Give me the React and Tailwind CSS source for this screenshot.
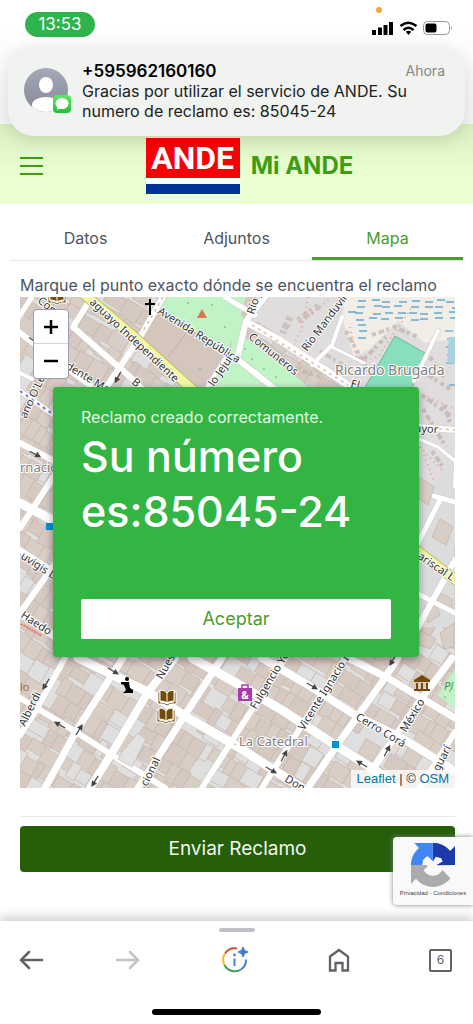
import React from "react";

const sans = "font-['Inter','Liberation_Sans',sans-serif]";

// small seeded generator so the city blocks are always the same
const makeRandom = (seed) => () => {
  seed = (seed * 16807) % 2147483647;
  return seed / 2147483647;
};

const buildings = (() => {
  const rnd = makeRandom(77);
  const list = [];
  for (let row = -18; row < 22; row++) {
    let x = -330;
    while (x < 340) {
      const w = 7 + Math.round(rnd() * 13);
      const h = 12 + Math.round(rnd() * 8);
      const r = rnd();
      if (r > 0.1) {
        list.push({ x, y: row * 17 + Math.round(rnd() * 3), w, h, fill: r > 0.9 ? "#e0dfe0" : r > 0.5 ? "#d9cec6" : "#d5c9c1" });
      }
      x += w;
    }
  }
  return list;
})();

const roads = [
  { d: "M58 361 L128 395 L168 421 L220 451 L252 472 L282 491", w: 10 },
  { d: "M0 401 L48 430 L92 458 L145 491", w: 7 },
  { d: "M172 361 L218 387 L265 415 L312 446 L355 473 L378 491", w: 10 },
  { d: "M242 361 L288 388 L335 418 L382 441 L435 474", w: 9 },
  { d: "M328 361 L368 381 L408 405 L435 421", w: 8 },
  { d: "M45 361 L15 415 L0 438", w: 7 },
  { d: "M103 361 L58 431 L25 491", w: 8 },
  { d: "M155 361 L128 395 L92 456 L70 491", w: 9 },
  { d: "M202 361 L165 418 L118 491", w: 8 },
  { d: "M265 361 L217 436 L182 491", w: 7 },
  { d: "M325 361 L282 428 L242 491", w: 7 },
  { d: "M378 361 L362 385 L315 451 L288 491", w: 8 },
  { d: "M432 361 L402 401 L352 473", w: 8 },
  { d: "M435 435 L400 491", w: 7 },
  { d: "M12 0 L0 18", w: 6 },
  { d: "M72 0 L53 30 L117 86 L122 92", w: 7 },
  { d: "M143 0 L120 40 L85 92", w: 7 },
  { d: "M0 36 L70 88", w: 7 },
  { d: "M0 76 L12 82", w: 5 },
  { d: "M0 94 L34 118", w: 6 },
  { d: "M0 146 L34 164", w: 7 },
  { d: "M0 206 L34 224", w: 10 },
  { d: "M36 176 L0 231", w: 7 },
  { d: "M0 253 L34 275", w: 7 },
  { d: "M34 268 L0 316", w: 7 },
  { d: "M0 316 L60 356", w: 9 },
  { d: "M245 0 L226 24 L217 62 L255 92", w: 7 },
  { d: "M205 0 L235 18", w: 6 },
  { d: "M228 26 L258 42 L328 88", w: 8 },
  { d: "M322 20 L312 48 L292 68", w: 5 },
  { d: "M312 50 L344 66", w: 4 },
  { d: "M418 34 L394 84", w: 5 },
  { d: "M398 130 L435 133", w: 7 },
  { d: "M399 142 L418 150 L435 164", w: 4 },
  { d: "M435 162 L434 190", w: 3 },
  { d: "M414 199 L435 205", w: 6 },
  { d: "M420 203 L398 246", w: 6 },
  { d: "M435 263 L398 330", w: 7 },
  { d: "M398 297 L435 316", w: 6 },
  { d: "M206 60 L186 92", w: 5 },
];

const streetNames = [
  { t: "aguayo Independiente", x: 69, y: 6, a: 43 },
  { t: "Avenida República", x: 137, y: 16, a: 32 },
  { t: "Comuneros", x: 228, y: 41, a: 39 },
  { t: "Río J", x: 234, y: 18, a: -72 },
  { t: "Río Manduvirá", x: 287, y: 55, a: -53 },
  { t: "lo Jejuí", x: 194, y: 90, a: -56 },
  { t: "Cons", x: 17, y: 5, a: 38 },
  { t: "dente Mar", x: 45, y: 71, a: 31 },
  { t: "B", x: 111, y: 86, a: 40 },
  { t: "ano O'Lea", x: 6, y: 122, a: -65 },
  { t: "uvigis Da", x: 0, y: 261, a: 33 },
  { t: "Haedo", x: 0, y: 320, a: 33 },
  { t: "Alberdi", x: 5, y: 430, a: -64 },
  { t: "Nues", x: 142, y: 383, a: -60 },
  { t: "cional", x: 127, y: 490, a: -64 },
  { t: "Fulgencio Yeg", x: 236, y: 413, a: -59 },
  { t: "Vicente Ignacio Itu", x: 284, y: 434, a: -58 },
  { t: "Cerro Corá", x: 335, y: 422, a: 31 },
  { t: "México", x: 386, y: 436, a: -59 },
  { t: "guarí", x: 419, y: 475, a: -63 },
  { t: "Don", x: 264, y: 484, a: 31 },
  { t: "ayor", x: 395, y: 135, a: 3 },
  { t: "ariscal L", x: 397, y: 261, a: 34 },
  { t: "El", x: 330, y: 90, a: 14 },
];

const waves = (() => {
  const rnd = makeRandom(19);
  const list = [];
  for (let y = 3; y < 46; y += 6) {
    for (let x = 322; x < 432; x += 13) {
      const px = x + Math.round(rnd() * 6);
      const inBay = y < 26 || px < 345 - (y - 26) / 2;
      if (inBay && px > 322 + y / 5) list.push([px, y + Math.round(rnd() * 2)]);
    }
  }
  return list;
})();

const arrows = [
  [93, 374, 30], [26, 387, 122], [40, 428, 210], [59, 433, -58], [75, 484, 122],
  [292, 389, 30], [264, 459, -62], [251, 473, 30], [342, 467, 210], [367, 454, -62],
  [373, 363, 122], [98, 80, 118], [15, 157, 28], [14, 44, 35],
];

const Book = ({ x, y }) => (
  <g transform={`translate(${x} ${y})`} fill="#734a08" stroke="#fff" strokeWidth="1">
    <path d="M-9 -5 v12 q6 -1 9 2 q3 -3 9 -2 v-12 l-2 0 v10 q-4 0 -7 2 q-3 -2 -7 -2 v-10 z" />
    <path d="M-7 -7 q5 0 7 3 q2 -3 7 -3 v11 q-5 0 -7 2 q-2 -2 -7 -2 z" />
    <path d="M0 -4 v10" />
  </g>
);

const CityMap = () => (
  <svg
    className="block h-[491px] w-full font-['Noto_Sans',sans-serif]"
    viewBox="0 0 435 491"
    preserveAspectRatio="xMidYMid slice"
    role="img"
    aria-label="Mapa"
  >
    <rect width="435" height="491" fill="#e0dfdf" />
    <g transform="translate(217 245) rotate(31)" stroke="#c6b7ad" strokeWidth="0.7">
      {buildings.map((b, i) => (
        <rect key={i} x={b.x} y={b.y} width={b.w} height={b.h} fill={b.fill} />
      ))}
    </g>

    {/* Costa and quieter blocks in the north */}
    <path d="M246 0 H435 V250 H398 V90 H330 L228 26 Z" fill="#dfdddd" />
    <path d="M325 0 H435 V42 L404 46 L378 24 L350 52 L334 60 L322 20 Z" fill="#f1ede7" />
    <g stroke="#b9aaa1" strokeWidth="4" strokeDasharray="4 3 6 2 3 4" fill="none">
      <path d="M326 34 L348 74 M352 38 L374 30 L398 40 M410 60 L424 80 M344 62 L366 40 M402 74 L430 92" opacity="0.6" />
      <path d="M402 98 L432 120 M403 112 L426 150 M412 154 L430 180 M424 108 L430 126" opacity="0.6" />
      <path d="M270 20 L262 38 M278 24 L300 8" opacity="0.5" strokeWidth="7" />
      <path d="M236 26 L282 56 M300 54 L330 72 M276 72 L300 80" opacity="0.5" />
    </g>
    <g stroke="#ed9d91" strokeWidth="1.3" strokeDasharray="1 4" fill="none">
      <path d="M288 0 L282 30 L272 52 L284 76 M292 16 L312 0 M330 30 L338 66 L358 60 L392 10 M400 150 L434 186 M404 158 L420 200 M408 100 L434 112" strokeWidth="2" />
    </g>
    <path d="M398 178 L414 186 L434 160 V330 H398 Z" fill="#dddcdd" />
    <g fill="#d9cec6" stroke="#c2b2a7" strokeWidth="0.7">
      <path d="M399 180 L414 190 L408 208 L399 202 Z M420 222 L433 230 L426 248 L412 240 Z M404 310 L414 304 L420 318 L408 326 Z M420 296 L432 302 V314 L416 306 Z M400 334 L416 342 L410 352 L399 348 Z M420 336 L434 326 V350 L424 352 Z" />
    </g>
    <g stroke="#3f94cf" strokeWidth="1.2">
      {waves.map(([x, y], i) => (
        <path key={i} d={`M${x} ${y} h8`} />
      ))}
      <path d="M425 34 h8 M427 42 h7 M426 50 h8 M427 58 h7 M426 66 h8 M429 88 h6" />
    </g>
    <path d="M429 40 H435 V66 H427 Z" fill="#aad3df" />

    {/* Parks */}
    <path d="M148 0 H226 L218 28 L205 60 L136 16 Z" fill="#c0f3c6" />
    <path d="M216 8 L224 22 L216 58 L254 92 H186 L210 60 Z" fill="#c0f3c6" />
    <path d="M222 38 L282 84 L288 92 H250 L219 62 Z" fill="#c0f3c6" />
    <path d="M141 14 L208 56 L184 92 H170 L118 46 Z" fill="#d4c6bd" stroke="#c2b2a7" strokeWidth="0.7" />
    <path d="M168 34 L148 60" stroke="#c2b2a7" />
    <path d="M375 39 L405 56 L392 92 H344 Z" fill="#88dfbe" stroke="#62a68d" strokeWidth="0.8" />
    <path d="M435 372 L418 398 L435 412 Z" fill="#c0f3c6" />
    <g fill="#82c77f">
      {[[164, 26], [192, 8], [180, 72], [225, 52], [232, 62], [244, 72], [256, 80], [238, 80], [168, 6], [205, 30], [430, 394], [425, 400]].map(([x, y]) => (
        <circle key={`${x}-${y}`} cx={x} cy={y} r="1" />
      ))}
    </g>

    {/* Streets */}
    <g fill="none" stroke="#fff" strokeLinejoin="round" strokeLinecap="round">
      {roads.map((r) => (
        <path key={r.d} d={r.d} strokeWidth={r.w} stroke="#cfc8c4" />
      ))}
      {roads.map((r) => (
        <path key={r.d} d={r.d} strokeWidth={r.w - 1} />
      ))}
    </g>
    <g fill="none" strokeDasharray="3 4">
      <path d="M232 28 L328 88 M398 130 L435 133 M143 0 L122 36" stroke="#e3c9c6" strokeWidth="2" />
      <path d="M0 94 L34 118" stroke="#7774c9" strokeWidth="2" />
      <path d="M220 440 L186 491 M204 448 L176 491 M298 491 L318 460" stroke="#bde5b6" strokeWidth="2" strokeDasharray="2 6" />
    </g>
    <path d="M102 455 L118 436 L126 442 L112 470 L98 462 Z" fill="#e2e2e3" stroke="#aaa" strokeWidth="0.5" />
    <g fill="none">
      <path d="M64 -3 L112 38 L174 94 M395 252 L437 284" stroke="#c2bd68" strokeWidth="11" />
      <path d="M64 -3 L112 38 L174 94 M395 252 L437 284" stroke="#f3f6a5" strokeWidth="9" />
    </g>

    {/* One-way arrows */}
    {arrows.map(([x, y, a]) => (
      <g key={`${x}-${y}`} transform={`translate(${x} ${y}) rotate(${a})`} stroke="#444" fill="#444">
        <path d="M-6 0 H3" strokeWidth="1.2" />
        <path d="M1 -3 L7 0 L1 3 Z" stroke="none" />
      </g>
    ))}

    <g fill="#333" stroke="#fff" strokeWidth="2" strokeLinejoin="round" paintOrder="stroke" fontSize="11">
      {streetNames.map((n) => (
        <text key={n.t} transform={`translate(${n.x} ${n.y}) rotate(${n.a})`}>
          {n.t}
        </text>
      ))}
    </g>
    <g fill="#83807f" stroke="#fff" strokeWidth="2" paintOrder="stroke" fontSize="13">
      <text x="315" y="78" fontSize="14">Ricardo Brugada</text>
      <text x="219" y="449">La Catedral</text>
      <text x="0" y="175">rnacio</text>
    </g>
    <text x="0" y="394" fontSize="11" fill="#a6662e">lo</text>
    <text x="424" y="393" fontSize="11" fontStyle="italic" fill="#52875a">Pl</text>
    <path d="M1 327 L22 339" stroke="#f06b60" strokeWidth="2" strokeDasharray="2 1" />

    {/* Points of interest */}
    <path d="M130 2 V18 M125 7 H135" stroke="#000" strokeWidth="2" />
    <path d="M182 12 L187 21 H177 Z" fill="#d9764a" />
    <Book x={37} y={-1} />
    <Book x={147} y={400} />
    <Book x={146} y={418} />
    <circle cx="107" cy="382" r="2" />
    <path d="M105 385 H109 L110 391 L113 393 V396 H103 L106 393 L104 388 L101 387 V385 Z" />
    <path d="M218 391 H232 V404 H218 Z" fill="#ac39ac" />
    <path d="M222 391 V388 H228 V391" fill="none" stroke="#ac39ac" strokeWidth="1.5" />
    <text x="225" y="402" fontSize="10" fontWeight="700" fill="#fff" textAnchor="middle">&amp;</text>
    <path
      d="M402 378 L410 383 V385 H394 V383 Z M396 386 h2 v6 h-2 z M401 386 h2 v6 h-2 z M406 386 h2 v6 h-2 z M394 392 h16 v2 h-16 z"
      fill="#734a08"
    />
    <rect x="312" y="444" width="7" height="7" fill="#0092da" />
    <rect x="26" y="226" width="7" height="7" fill="#0092da" />
  </svg>
);

const StatusBar = () => (
  <div className="flex h-[124px] items-start justify-between bg-gradient-to-b from-white from-20% to-gray-100 pt-3 pr-5 pl-[25px]">
    <div className="flex h-[25px] w-[70px] items-center justify-center rounded-full bg-[#2fb34d] text-[17px] text-white">
      13:53
    </div>
    <svg width="82" height="32" viewBox="0 0 82 32" className="-mt-1.5" aria-hidden="true">
      <circle cx="8" cy="4" r="3" fill="#e9a93c" />
      <path d="M1 24 h4 v5 h-4 z M7 21.500 h4 v7.500 h-4 z M12.500 19 h4 v10 h-4 z M18 16 h4 v13 h-4 z" />
      <g fill="none" stroke="#000" strokeWidth="2.600">
        <path d="M29.500 20 Q37 13.500 45.500 20" />
        <path d="M32.500 24 Q37.500 19.500 42.500 24" />
      </g>
      <path d="M34.800 25.800 Q37.500 23.800 40.200 25.800 L37.500 29 Z" />
      <rect x="52.500" y="15.500" width="26" height="13" rx="4" fill="#fff" stroke="#999" />
      <rect x="54.500" y="17.500" width="11" height="9" rx="2" />
      <path d="M80 20 q2 2 0 4 z" fill="#999" />
    </svg>
  </div>
);

const Notification = () => (
  <div className="absolute inset-x-2 top-[46px] z-20 flex h-[90px] items-center gap-[11px] rounded-[26px] bg-[#f1f3f0] pr-5 pl-4 shadow-[0_4px_18px_rgba(0,0,0,0.12)]">
    <svg width="47" height="46" viewBox="0 0 47 46" className="shrink-0" aria-hidden="true">
      <defs>
        <linearGradient id="avatar" x1="0" y1="0" x2="0" y2="1">
          <stop offset="0" stopColor="#a5a8b6" />
          <stop offset="1" stopColor="#858896" />
        </linearGradient>
        <linearGradient id="bubble" x1="0" y1="0" x2="0" y2="1">
          <stop offset="0" stopColor="#5fe866" />
          <stop offset="1" stopColor="#1fc134" />
        </linearGradient>
        <clipPath id="face">
          <circle cx="22" cy="22" r="22" />
        </clipPath>
      </defs>
      <circle cx="22" cy="22" r="22" fill="url(#avatar)" />
      <g clipPath="url(#face)" fill="#fff">
        <ellipse cx="22" cy="17" rx="7" ry="8" />
        <ellipse cx="22" cy="37" rx="14" ry="8" />
      </g>
      <rect x="29" y="27" width="18" height="18" rx="4" fill="url(#bubble)" />
      <ellipse cx="38" cy="35.500" rx="6.500" ry="5.500" fill="#fff" />
      <path d="M33 38 L33 42 L37 40 Z" fill="#fff" />
    </svg>
    <div className="min-w-0 flex-1 text-base leading-5 text-[#202221]">
      <div className="flex items-center justify-between">
        <strong className="text-[17px] font-semibold text-black">+595962160160</strong>
        <span className="text-sm text-[#858786]">Ahora</span>
      </div>
      <p>Gracias por utilizar el servicio de ANDE. Su numero de reclamo es: 85045-24</p>
    </div>
  </div>
);

const Header = () => (
  <header className="relative flex h-20 items-center justify-center bg-gradient-to-b from-[#d9efbf] to-[#eaffd0] to-60% pl-[26px] text-[#3f9d14]">
    <button type="button" aria-label="Menú" className="absolute top-8 left-5">
      <svg width="23" height="20" viewBox="0 0 23 20" stroke="currentColor" strokeWidth="2">
        <path d="M0 2 H23 M0 10 H23 M0 18 H23" />
      </svg>
    </button>
    <div className="flex items-center gap-[11px]">
      <div className="mt-1 w-[94px] bg-white">
        <div className="flex h-10 items-center justify-center bg-[#f90006] font-['Liberation_Sans_Narrow','Roboto',sans-serif] text-[32px] font-bold text-white">
          ANDE
        </div>
        <div className="mt-1.5 h-2.5 bg-[#003399]" />
      </div>
      <h1 className="mt-1 text-2xl font-bold">Mi ANDE</h1>
    </div>
  </header>
);

const Tabs = () => (
  <div role="tablist" className="mx-2.5 mt-3 grid grid-cols-3 border-b border-gray-200 text-base text-[#4b5563]">
    {["Datos", "Adjuntos"].map((label) => (
      <button key={label} type="button" role="tab" className="h-11">
        {label}
      </button>
    ))}
    <button type="button" role="tab" aria-selected="true" className="h-11 border-b-3 border-[#4d9c2d] pt-[3px] text-[#4d9c2d]">
      Mapa
    </button>
  </div>
);

const ClaimDialog = () => (
  <div
    role="dialog"
    aria-label="Reclamo creado"
    className="absolute top-[90px] right-9 left-[33px] flex h-[270px] flex-col rounded-sm bg-[#33b544] px-7 pt-5 pb-[18px] text-white shadow-[0_3px_8px_rgba(0,0,0,0.4)]"
  >
    <p className="text-base leading-5 text-[#e4f7e2]">Reclamo creado correctamente.</p>
    <p className="mt-0.5 text-[43px] leading-[55px] font-medium">
      Su número
      <br />
      es:85045-24
    </p>
    <button type="button" className="mt-auto h-10 rounded-xs bg-white text-lg text-[#4d9c2d]">
      Aceptar
    </button>
  </div>
);

const Recaptcha = () => (
  <div className="absolute right-0 bottom-4 flex h-[68px] w-20 flex-col items-center rounded-l-sm bg-[#f9f9f9] pt-1.5 shadow-[0_0_5px_gray]">
    <svg width="44" height="44" viewBox="0 0 64 64" aria-hidden="true">
      <path fill="#1c3aa9" d="M64 31.955l-.033-1.370V4.687l-7.160 7.160C50.948 4.674 42.033.093 32.050.093V27.400L36.500 27.400L31 31.955Z" />
      <path fill="#1c3aa9" d="M32 .093V16.400C38 16 43.500 19.500 45.016 23.976L36.709 32.283L64 31.955V4.687L56.807 11.847C50.948 4.674 42 .093 32 .093Z" />
      <path fill="#4285f4" d="M31.862.094l-1.370.033H4.594l7.160 7.160C4.580 13.147 0 22.060 0 32.046H16.300C16.700 26 19.500 21.700 23.500 19.200L31.800 27.500Z" />
      <path fill="#ababab" d="M.001 32.045V59.313l7.193-7.160c5.860 7.173 14.774 11.754 24.760 11.754 10.388 0 19.622-4.960 25.458-12.640L45.676 39.407a15.550 15.550 0 0 1-4.754 5.334c-2.050 1.600-4.952 2.906-8.968 2.906-.485 0-.860-.057-1.135-.163-4.976-.393-9.288-3.140-11.828-7.124l8.307-8.307Z" />
      <path fill="#f9f9f9" d="M24 19 L32 27 L36 20 L44 22 L46 27 L37 32 L45 39 L38 46 L30 39 L25 44 L18 40 L25 33 L18 31 L17 24 L25 26 Z" />
    </svg>
    <p className="mt-0.5 font-['Liberation_Sans',sans-serif] text-[6px] leading-2 whitespace-nowrap text-[#444]">
      <a href="#privacidad">Privacidad</a> - <a href="#condiciones">Condiciones</a>
    </p>
  </div>
);

const BrowserBar = () => (
  <footer className="relative flex h-[103px] flex-col items-center bg-white pt-[7px] shadow-[0_-4px_10px_rgba(0,0,0,0.2)]">
    <div className="h-1 w-9 rounded-full bg-[#bdc1c6]" />
    <nav className="mt-3 flex w-full items-center justify-between pr-[21px] pl-[18px] text-[#5f6368]">
      <div className="flex gap-[71px]">
        <button type="button" aria-label="Atrás">
          <svg width="26" height="32" viewBox="0 0 26 32" fill="none" stroke="currentColor" strokeWidth="2.500" strokeLinecap="round">
            <path d="M24 16 H3 M11 8 L3 16 L11 24" />
          </svg>
        </button>
        <button type="button" aria-label="Adelante" className="text-[#c4c4c4]">
          <svg width="26" height="32" viewBox="0 0 26 32" fill="none" stroke="currentColor" strokeWidth="2.500" strokeLinecap="round">
            <path d="M2 16 H23 M15 8 L23 16 L15 24" />
          </svg>
        </button>
      </div>
      <button type="button" aria-label="Información">
        <svg width="30" height="32" viewBox="0 0 30 32" fill="none" strokeWidth="2">
          <path d="M17 4.500 A11.500 11.500 0 0 0 5 9.500" stroke="#d94a3d" />
          <path d="M5 9.500 A11.500 11.500 0 0 0 4.500 21" stroke="#f4b928" />
          <path d="M4.500 21 A11.500 11.500 0 0 0 21 25.500" stroke="#3f9f56" />
          <path d="M21 25.500 A11.500 11.500 0 0 0 26 15.500" stroke="#4a7fd6" />
          <path d="M14.500 14.500 V22" stroke="#4a7fd6" />
          <circle cx="14.500" cy="11" r="1.400" fill="#4a7fd6" />
          <path d="M23 3 Q23.700 7.300 28 8 Q23.700 8.700 23 13 Q22.300 8.700 18 8 Q22.300 7.300 23 3 Z" fill="#3b74d8" stroke="#3b74d8" strokeWidth="1" />
        </svg>
      </button>
      <button type="button" aria-label="Inicio">
        <svg width="22" height="32" viewBox="0 0 22 32" fill="none" stroke="currentColor" strokeWidth="2.300">
          <path d="M2 12.500 L11 6 L20 12.500 V26.500 H14.500 V19 H7.500 V26.500 H2 Z" />
        </svg>
      </button>
      <button type="button" aria-label="Pestañas" className="h-[23px] w-[23px] rounded-xs border-2 border-current text-xs">
        6
      </button>
    </nav>
    <div className="mt-auto mb-[9px] h-[6px] w-[169px] rounded-full bg-black" />
  </footer>
);

const App = () => {
  return (
    <div className={`relative flex min-h-screen flex-col bg-white ${sans}`}>
      <StatusBar />
      <Notification />
      <Header />

      <main className="relative flex-1">
        <Tabs />
        <div className="pr-[18px] pl-5 text-[#4b5563]">
          <p className="mt-3 text-base leading-6">
            Marque el punto exacto dónde se encuentra el reclamo
          </p>
          <div className="relative overflow-hidden">
            <CityMap />
            <div className="absolute top-3 left-[13px] w-9 overflow-hidden rounded border border-gray-400 bg-white text-black">
              <button type="button" aria-label="Acercar" className="flex h-[34px] w-full items-center justify-center border-b border-gray-300">
                <svg width="14" height="14" viewBox="0 0 14 14" stroke="currentColor" strokeWidth="2.500">
                  <path d="M7 0 V14 M0 7 H14" />
                </svg>
              </button>
              <button type="button" aria-label="Alejar" className="flex h-[34px] w-full items-center justify-center">
                <svg width="14" height="14" viewBox="0 0 14 14" stroke="currentColor" strokeWidth="2.500">
                  <path d="M0 7 H14" />
                </svg>
              </button>
            </div>
            <div className="absolute right-0 bottom-0 bg-white/75 px-1.5 font-['Liberation_Sans',sans-serif] text-[13px] leading-[18px] text-[#333]">
              <a href="#leaflet" className="text-[#0078a8]">Leaflet</a> | ©{" "}
              <a href="#osm" className="text-[#0078a8]">OSM</a>
            </div>
            <ClaimDialog />
          </div>
          <hr className="mt-7 border-gray-200" />
          <button type="button" className="mt-[9px] mb-[49px] h-[46px] w-full rounded-sm bg-[#265e0a] text-[19px] text-[#f2f8ee]">
            Enviar Reclamo
          </button>
        </div>
        <Recaptcha />
      </main>

      <BrowserBar />
    </div>
  );
};

export default App;
